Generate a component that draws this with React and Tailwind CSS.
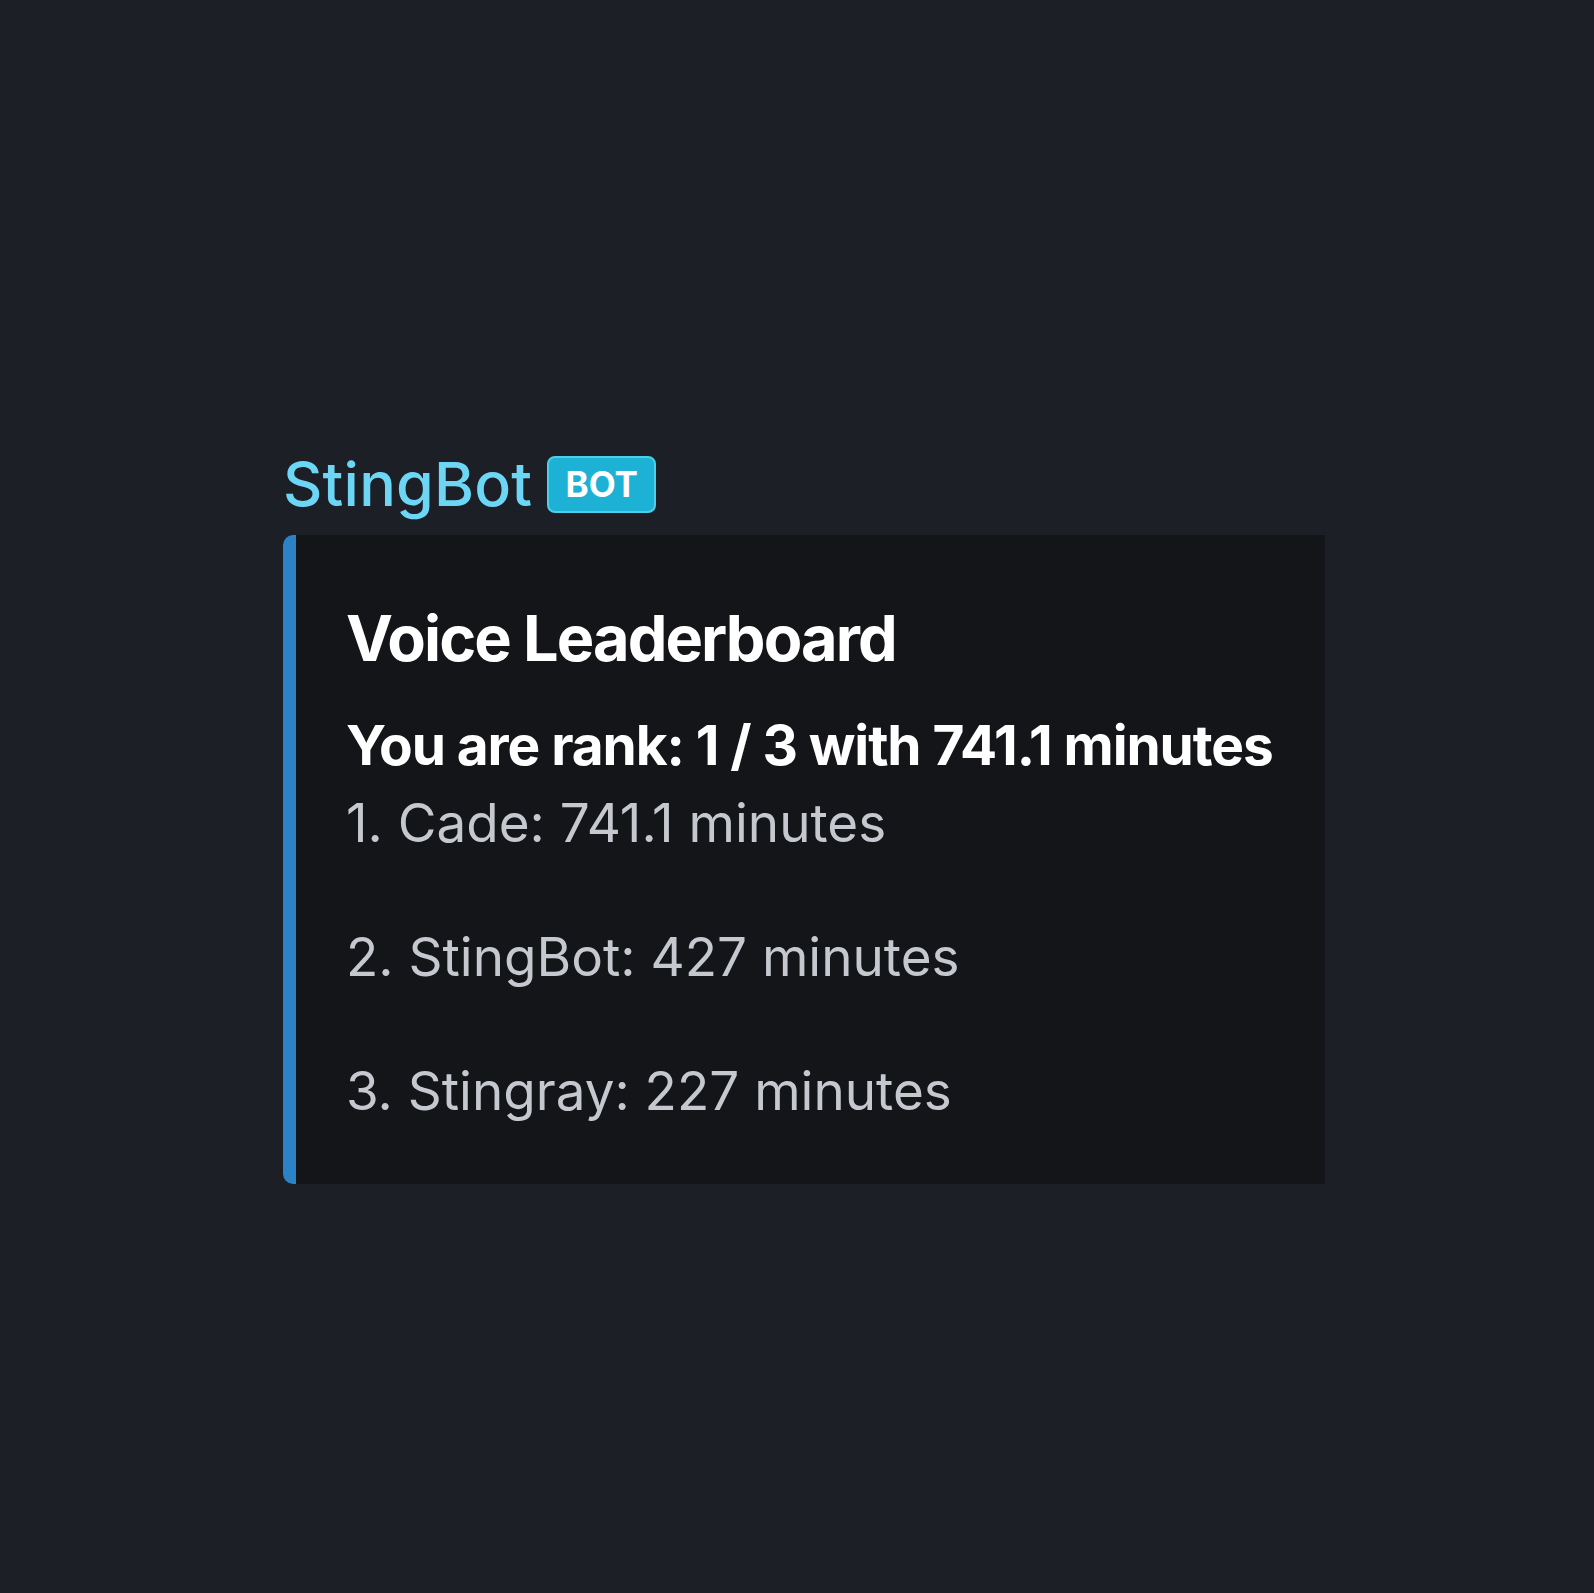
export default function App() {
  const items = [
    "1. Cade: 741.1 minutes",
    "2. StingBot: 427 minutes",
    "3. Stingray: 227 minutes",
  ];
  return (
    <div
      className="min-h-[1593px] w-full bg-[#1d1f27] pt-[449px] pl-[283px]"
      style={{ fontFamily: "Inter, 'Noto Sans', sans-serif" }}
    >
      <div className="flex items-center h-[70px]">
        <span className="text-[61px] leading-[70px] font-medium text-[#6cd6f4] tracking-[0.2px]">
          StingBot
        </span>
        <span className="ml-[15px] flex items-center justify-center w-[109px] h-[57px] rounded-[8px] bg-[#1db2d5] border-2 border-[#4ccfea] text-white text-[35px] font-bold leading-none">
          BOT
        </span>
      </div>
      <div className="mt-[16px] w-[1042px] h-[649px] flex rounded-l-[10px] overflow-hidden bg-[#141519]">
        <div className="w-[13px] bg-[#2b82c6] shrink-0" />
        <div className="pl-[50px] pt-[65px]">
          <div className="text-[63px] leading-[76px] font-bold text-white tracking-[-1.9px]">
            Voice Leaderboard
          </div>
          <div className="mt-[36px] text-[55px] leading-[67px] font-bold text-white tracking-[-1.1px]">
            You are rank: 1 / 3 with 741.1 minutes
          </div>
          <div className="mt-[11px] text-[53px] leading-[67px] text-[#c5c8cf] tracking-[0px]">
            {items.map((t, i) => (
              <div key={i}>
                {i > 0 && <div className="h-[67px]" />}
                <div>{t}</div>
              </div>
            ))}
          </div>
        </div>
      </div>
    </div>
  );
}
